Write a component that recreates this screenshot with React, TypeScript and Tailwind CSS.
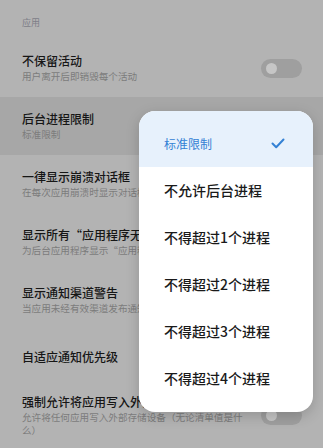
import React from 'react';

type Row = {
  title: string;
  sub?: string;
  toggle?: boolean;
  active?: boolean;
  pad?: string;
};

const rows: Row[] = [
  { title: '不保留活动', sub: '用户离开后即销毁每个活动', toggle: true },
  { title: '后台进程限制', sub: '标准限制', active: true },
  { title: '一律显示崩溃对话框', sub: '在每次应用崩溃时显示对话框' },
  { title: '显示所有“应用程序无响应”对话框', sub: '为后台应用程序显示“应用程序无响应”对话框' },
  { title: '显示通知渠道警告', sub: '当应用未经有效渠道发布通知时，在屏幕上显示警告' },
  { title: '自适应通知优先级', pad: 'pt-[20px] pb-[15px]' },
  { title: '强制允许将应用写入外部存储设备', sub: '允许将任何应用写入外部存储设备（无论清单值是什么）', toggle: true },
];

const options = ['标准限制', '不允许后台进程', '不得超过1个进程', '不得超过2个进程', '不得超过3个进程', '不得超过4个进程'];

const Toggle = () => (
  <div className="relative w-[41px] h-[19px] shrink-0 rounded-full bg-[#9f9f9f]">
    <div className="absolute left-[5px] top-[4px] w-[11px] h-[11px] rounded-full bg-[#c6c6c6]" />
  </div>
);

const Check = () => (
  <svg width="14" height="11" viewBox="0 0 14 11" fill="none">
    <path d="M1.5 5.5 L5.2 9.2 L12.5 1.5" stroke="#3481d4" strokeWidth="2" strokeLinecap="round" strokeLinejoin="round" />
  </svg>
);

export default function App() {
  return (
    <div
      className="relative w-[323px] h-[448px] overflow-hidden bg-[#b3b3b3]"
      style={{ fontFamily: '"Noto Sans CJK SC", "Noto Sans", sans-serif' }}
    >
      <div className="px-[22px] pt-[17px] pb-[10px] text-[9px] leading-[12px] text-[#7e7e88]">应用</div>

      {rows.map((r) => (
        <div
          key={r.title}
          className={`flex items-center gap-[7px] pl-[22px] pr-[21px] ${r.pad ?? 'py-[14px]'} ${r.active ? 'bg-[#a7a7a7]' : ''}`}
        >
          <div className="flex-1 min-w-0">
            <div className="text-[12px] leading-[16px] font-medium text-[#161616] whitespace-nowrap">{r.title}</div>
            {r.sub && (
              <div className="mt-[1px] text-[9.6px] leading-[13px] text-[#7c7c7c]">{r.sub}</div>
            )}
          </div>
          {r.toggle && <Toggle />}
        </div>
      ))}

      {/* dropdown menu */}
      <div className="absolute left-[139px] top-[111px] w-[174px] h-[301px] rounded-[16px] overflow-hidden bg-white shadow-[0_4px_14px_rgba(0,0,0,0.18)]">
        {options.map((o, i) => (
          <div
            key={o}
            className={
              i === 0
                ? 'flex items-center justify-between h-[56px] pt-[9px] pl-[25px] pr-[28px] bg-[#e7f1fc]'
                : 'flex items-center h-[47px] pl-[25px] pr-[28px]'
            }
          >
            {i === 0 ? (
              <>
                <span className="text-[12px] text-[#3481d4]">{o}</span>
                <Check />
              </>
            ) : (
              <span className="text-[14px] font-medium text-[#1a1a1a]">{o}</span>
            )}
          </div>
        ))}
      </div>
    </div>
  );
}
